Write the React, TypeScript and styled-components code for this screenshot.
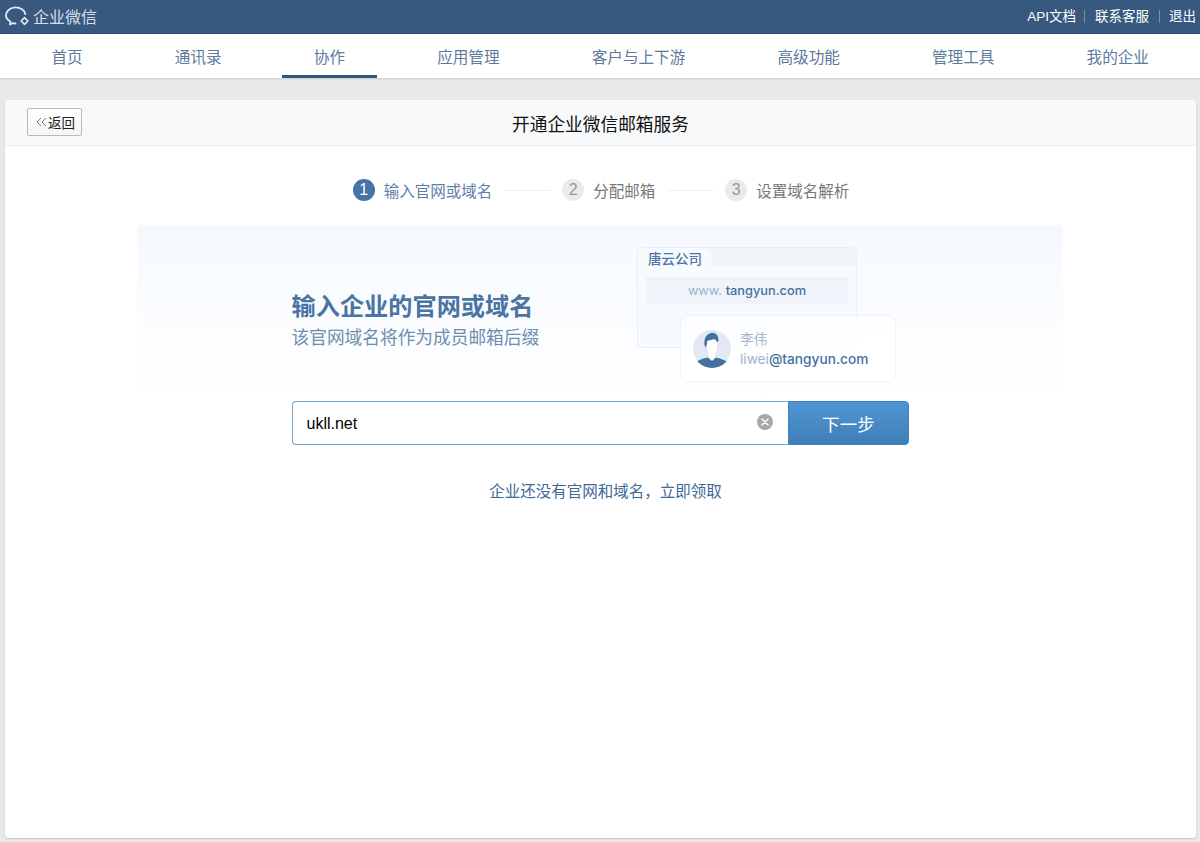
import React from "react";
import styled, { createGlobalStyle } from "styled-components";

const GlobalStyle = createGlobalStyle`
  html, body {
    margin: 0;
    padding: 0;
    height: 100%;
    background: #e8e9eb;
  }
  body {
    font-family: "Liberation Sans", "Noto Sans CJK SC", sans-serif;
    overflow: hidden;
  }
  * { box-sizing: border-box; }
`;

const Page = styled.div`
  height: 842px;
  display: flex;
  flex-direction: column;
`;

// 顶部栏
const TopBar = styled.header`
  height: 34px;
  flex: none;
  display: flex;
  align-items: center;
  justify-content: space-between;
  padding: 0 4px 1px 5px;
  background: #38597f;
  border-bottom: 1px solid #2b4c70;
`;

const Brand = styled.div`
  display: flex;
  align-items: center;
  gap: 3px;
  color: #d5dee8;
  font-size: 16px;
`;

const TopLinks = styled.div`
  display: flex;
  align-items: center;
  color: #fff;
  font-size: 13.5px;
`;

const TopLink = styled.a<{ $divided?: boolean; $before?: number; $after?: number }>`
  padding-right: ${p => p.$before ?? 0}px;
  margin-right: ${p => p.$after ?? 0}px;
  line-height: 13px;
  border-right: ${p => (p.$divided ? "1px solid #7790ab" : "none")};
`;

const NavBar = styled.nav`
  height: 44px;
  flex: none;
  display: flex;
  justify-content: space-between;
  padding: 0 19px 0 19.5px;
  background: #fff;
  box-shadow: 0 1px 2px rgba(0, 0, 0, 0.14);
`;

const NavItem = styled.a<{ $active?: boolean }>`
  display: flex;
  align-items: center;
  padding: 0 32px 1px;
  font-size: 15.6px;
  color: #5d7a9c;
  border-bottom: 3px solid ${p => (p.$active ? "#2f5585" : "transparent")};
  border-top: 3px solid transparent;
`;

// 主面板
const Panel = styled.main`
  width: 1191px;
  height: 738px;
  margin: 22px 0 0 5px;
  background: #fff;
  border-radius: 4px;
  box-shadow: 0 1px 2px rgba(0, 0, 0, 0.16);
  overflow: hidden;
`;

const PanelHead = styled.div`
  position: relative;
  height: 46px;
  display: flex;
  align-items: center;
  justify-content: center;
  background: #f8f9fb;
  border-bottom: 1px solid #ebedf0;
  font-size: 17.7px;
  color: #111;
`;

const BackButton = styled.button`
  position: absolute;
  left: 22px;
  top: 8px;
  width: 55px;
  height: 28px;
  padding: 0 0 0 2px;
  display: flex;
  align-items: center;
  justify-content: center;
  gap: 1px;
  font-family: inherit;
  font-size: 13.5px;
  color: #222;
  background: linear-gradient(#fff, #f5f5f5);
  border: 1px solid #b9b9b9;
  border-radius: 2px;
`;

const Steps = styled.div`
  display: flex;
  justify-content: center;
  align-items: center;
  height: 79px;
  padding: 9px 0 0 1px;
`;

const StepNum = styled.span<{ $active?: boolean }>`
  width: 22px;
  height: 22px;
  margin-right: 9px;
  display: flex;
  align-items: center;
  justify-content: center;
  border-radius: 50%;
  font-size: 16px;
  color: ${p => (p.$active ? "#fff" : "#999")};
  background: ${p => (p.$active ? "#4674a8" : "#ebebeb")};
`;

const StepLabel = styled.span<{ $active?: boolean }>`
  font-size: 15.5px;
  color: ${p => (p.$active ? "#5d7fa6" : "#777")};
`;

const StepDots = styled.span`
  width: 45px;
  margin: 0 12px 0 13px;
  border-top: 1px dotted #dedede;
`;

const Banner = styled.section`
  position: relative;
  width: 926px;
  height: 176px;
  margin-left: 132px;
  padding: 66px 0 0 154.5px;
  background: linear-gradient(#f5f9fe, #fff);
`;

const BannerTitle = styled.h2`
  margin: 0;
  font-size: 24.2px;
  line-height: 32px;
  font-weight: 700;
  color: #4a74a3;
`;

const BannerSub = styled.p`
  margin: 2px 0 0;
  font-size: 17.7px;
  line-height: 26px;
  color: #6d8db0;
`;

// 示意图
const Illustration = styled.div`
  position: absolute;
  left: 500px;
  top: 22px;
  width: 260px;
  height: 136px;
`;

const SiteCard = styled.div`
  position: absolute;
  left: 0;
  top: 0;
  width: 220px;
  height: 101px;
  background: #f8fbfe;
  border: 1px solid #e8eff7;
  border-radius: 6px;
  overflow: hidden;
`;

const SiteTabStrip = styled.div`
  height: 18px;
  background: #f1f6fc;
`;

const SiteTab = styled.div`
  width: 74px;
  height: 23px;
  padding-left: 10px;
  font-size: 13.5px;
  font-weight: 500;
  line-height: 23px;
  color: #4d75a5;
  background: #f8fbfe;
  border-radius: 0 8px 0 0;
`;

const DomainBar = styled.div`
  margin: 11px 8px 0;
  height: 27px;
  display: flex;
  align-items: center;
  justify-content: center;
  background: #f0f4fa;
  font-family: "Inter", "Noto Sans", sans-serif;
  font-size: 12.8px;
`;

const Muted = styled.span`
  color: #9db2cf;
`;

const Strong = styled.span`
  color: #44709f;
  font-weight: 500;
`;

const UserCard = styled.div`
  position: absolute;
  left: 43px;
  top: 68px;
  width: 216px;
  height: 67px;
  display: flex;
  align-items: center;
  gap: 9px;
  padding-left: 12px;
  background: rgba(255, 255, 255, 0.72);
  border: 1px solid #eef3f9;
  border-radius: 8px;
`;

const UserText = styled.div`
  font-family: "Inter", "Noto Sans", "Noto Sans CJK SC", sans-serif;
  font-size: 13.7px;
  line-height: 20px;
`;

const UserName = styled.div`
  color: #a4b6cf;
`;

const InputRow = styled.div`
  display: flex;
  width: 617px;
  height: 44px;
  margin: 0 0 0 287px;
`;

const InputBox = styled.div`
  position: relative;
  flex: 1;
  border: 1px solid #6ea6d8;
  border-right: none;
  border-radius: 4px 0 0 4px;
  background: #fff;
`;

const TextInput = styled.input`
  width: 100%;
  height: 100%;
  padding: 1px 40px 0 13.5px;
  border: none;
  outline: none;
  background: transparent;
  font-family: inherit;
  font-size: 16px;
  color: #000;
`;

const ClearIcon = styled.svg`
  position: absolute;
  right: 15px;
  top: 12px;
`;

const NextButton = styled.button`
  width: 121px;
  border: 1px solid #3f82bf;
  border-radius: 0 4px 4px 0;
  background: linear-gradient(#4f95d5, #3f7fb6);
  color: #fff;
  font-family: inherit;
  font-size: 17.5px;
  letter-spacing: 0.2px;
`;

const ClaimLink = styled.a`
  display: block;
  margin-top: 37px;
  padding-left: 10px;
  text-align: center;
  font-size: 15.5px;
  line-height: 20px;
  color: #3f6a94;
`;

const Logo = () => (
  <svg width="25" height="25" viewBox="0 0 25 25" fill="none" stroke="#e4eaf1" strokeWidth="1.8" strokeLinecap="round" strokeLinejoin="round">
    <path d="M10.5 19.500c-1 0-2-.1-2.900-.4L5 20.500l.3-3C2.600 16 1 13.900 1 11.500 1 7.100 5.300 3.400 10.500 3.400c4.900 0 9.100 2.800 9.800 6.600" />
    <path d="M19.500 13.600l3.400 3.400-3.400 3.400-3.400-3.400z" strokeWidth="1.5" />
  </svg>
);

const Avatar = () => (
  <svg width="38" height="38" viewBox="0 0 38 38">
    <defs>
      <clipPath id="avatar-clip">
        <circle cx="19" cy="19" r="19" />
      </clipPath>
    </defs>
    <g clipPath="url(#avatar-clip)">
      <rect width="38" height="38" fill="#e2e9f2" />
      <path d="M14 10h10v7c0 4-2 6-2 7v4l-3 3-3.500-3v-4c-1-2-1.500-5-1.500-7z" fill="#fff" />
      <path d="M12.500 17.500C10.500 14 10.500 5 18 3c4-1 8 2 7.500 8L24 12c-1-2-1.500-2.500-3-3-3 1.500-5.500 1.500-6.500 1.500-.5 2.500-.5 4.500-2 7z" fill="#44709f" />
      <path d="M4 32c1-2 6-3.500 11-4.500l4 3.500 4-3.500c4 1 9 2.500 11 4.500v6H4z" fill="#44709f" />
    </g>
  </svg>
);

const navItems = ["首页", "通讯录", "协作", "应用管理", "客户与上下游", "高级功能", "管理工具", "我的企业"];

export default function App() {
  return (
    <Page>
      <GlobalStyle />
      <TopBar>
        <Brand>
          <Logo />
          企业微信
        </Brand>
        <TopLinks>
          <TopLink $divided $before={8} $after={10}>API文档</TopLink>
          <TopLink $divided $before={10} $after={9}>联系客服</TopLink>
          <TopLink>退出</TopLink>
        </TopLinks>
      </TopBar>
      <NavBar>
        {navItems.map(item => (
          <NavItem key={item} $active={item === "协作"}>{item}</NavItem>
        ))}
      </NavBar>
      <Panel>
        <PanelHead>
          <BackButton>
            <svg width="11" height="10" viewBox="0 0 11 10" fill="none" stroke="#777" strokeWidth="1">
              <path d="M5 1L1 5l4 4M10 1L6 5l4 4" />
            </svg>
            返回
          </BackButton>
          开通企业微信邮箱服务
        </PanelHead>
        <Steps>
          <StepNum $active>1</StepNum>
          <StepLabel $active>输入官网或域名</StepLabel>
          <StepDots />
          <StepNum>2</StepNum>
          <StepLabel>分配邮箱</StepLabel>
          <StepDots />
          <StepNum>3</StepNum>
          <StepLabel>设置域名解析</StepLabel>
        </Steps>
        <Banner>
          <BannerTitle>输入企业的官网或域名</BannerTitle>
          <BannerSub>该官网域名将作为成员邮箱后缀</BannerSub>
          <Illustration>
            <SiteCard>
              <SiteTabStrip>
                <SiteTab>唐云公司</SiteTab>
              </SiteTabStrip>
              <DomainBar>
                <Muted>www.&nbsp;</Muted>
                <Strong>tangyun.com</Strong>
              </DomainBar>
            </SiteCard>
            <UserCard>
              <Avatar />
              <UserText>
                <UserName>李伟</UserName>
                <Muted>liwei</Muted>
                <Strong>@tangyun.com</Strong>
              </UserText>
            </UserCard>
          </Illustration>
        </Banner>
        <InputRow>
          <InputBox>
            <TextInput value="ukll.net" readOnly />
            <ClearIcon width="16" height="16" viewBox="0 0 16 16">
              <circle cx="8" cy="8" r="8" fill="#a8a8a8" />
              <path d="M5 5l6 6M11 5l-6 6" stroke="#fff" strokeWidth="1.5" strokeLinecap="round" />
            </ClearIcon>
          </InputBox>
          <NextButton>下一步</NextButton>
        </InputRow>
        <ClaimLink>{"企业还没有官网和域名\uFF0C立即领取"}</ClaimLink>
      </Panel>
    </Page>
  );
}
